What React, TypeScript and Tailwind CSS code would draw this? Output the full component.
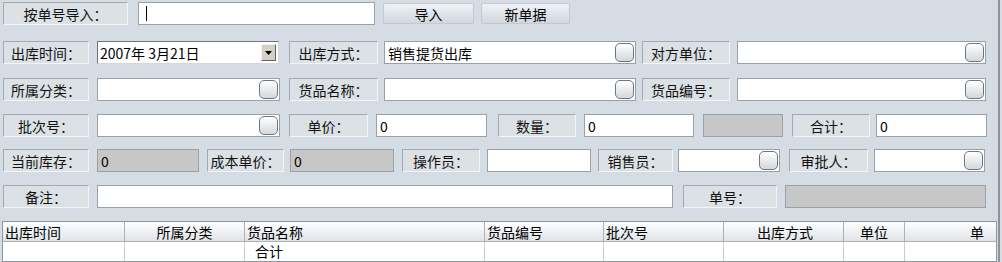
import React from "react";

const font = { fontFamily: '"Noto Sans CJK SC", "Noto Sans", sans-serif' };

function Label({ w, ml, children }: { w: number; ml: number; children: React.ReactNode }) {
  return (
    <div
      className="h-[23px] shrink-0 flex items-center justify-center border border-[#a3a9b0] border-b-[#f2f4f6] border-r-[#f2f4f6] bg-[#dce1e6] text-[14px] text-[#111] leading-none"
      style={{ width: w, marginLeft: ml }}
    >
      {children}
    </div>
  );
}

function PickBtn() {
  return (
    <div className="ml-auto mr-[1px] h-[19px] w-[19px] shrink-0 rounded-[5px] border border-[#6f767e] bg-gradient-to-b from-white to-[#d3d8de]" />
  );
}

function Input({
  w,
  ml,
  value,
  grey,
  pick,
}: {
  w: number;
  ml: number;
  value?: string;
  grey?: boolean;
  pick?: boolean;
}) {
  return (
    <div
      className={
        "h-[23px] shrink-0 flex items-center border border-[#98a1ab] pl-[3px] text-[14px] leading-none text-black " +
        (grey ? "bg-[#c7c7c7]" : "bg-white")
      }
      style={{ width: w, marginLeft: ml }}
    >
      <span>{value}</span>
      {pick && <PickBtn />}
    </div>
  );
}

function Row({ top, children }: { top: number; children: React.ReactNode }) {
  return (
    <div className="flex items-center" style={{ marginTop: top }}>
      {children}
    </div>
  );
}

const cols: { name: string; w: number; align: string }[] = [
  { name: "出库时间", w: 122, align: "justify-start pl-[2px]" },
  { name: "所属分类", w: 120, align: "justify-center" },
  { name: "货品名称", w: 240, align: "justify-start pl-[2px]" },
  { name: "货品编号", w: 119, align: "justify-start pl-[2px]" },
  { name: "批次号", w: 120, align: "justify-start pl-[2px]" },
  { name: "出库方式", w: 120, align: "justify-end pr-[30px]" },
  { name: "单位", w: 61, align: "justify-center" },
  { name: "单", w: 95, align: "justify-end pr-[15px]" },
];

export default function App() {
  return (
    <div className="relative w-[1002px] h-[262px] overflow-hidden bg-[#d5dce3]" style={font}>
      <div className="absolute right-[2px] top-0 h-full w-[2px] bg-[#8c939b]" />

      <Row top={2}>
        <Label w={125} ml={3}>按单号导入：</Label>
        <div className="ml-[10px] h-[23px] w-[237px] flex items-center border border-[#98a1ab] bg-white pl-[7px]">
          <div className="h-[15px] w-[1px] bg-black" />
        </div>
        <button className="ml-[8px] h-[21px] w-[91px] rounded-[2px] border border-[#c3cad2] bg-gradient-to-b from-[#eef1f5] to-[#d2d8df] text-[14px] leading-none text-black">
          导入
        </button>
        <button className="ml-[7px] h-[21px] w-[89px] rounded-[2px] border border-[#c3cad2] bg-gradient-to-b from-[#eef1f5] to-[#d2d8df] text-[14px] leading-none text-black">
          新单据
        </button>
      </Row>

      <Row top={16}>
        <Label w={86} ml={3}>出库时间：</Label>
        <div className="ml-[8px] h-[23px] w-[182px] flex items-center border border-[#6e747b] border-b-[#d6d6d6] border-r-[#d6d6d6] bg-white pl-[2px] text-[14px] leading-none">
          <span>2007年 3月21日</span>
          <div className="ml-auto mr-[2px] h-[17px] w-[15px] flex items-center justify-center border border-[#f4f4f4] border-b-[#5f646a] border-r-[#5f646a] bg-[#d4d0c8]">
            <svg width="7" height="4" viewBox="0 0 7 4">
              <path d="M0 0 H7 L3.5 4 Z" fill="#000" />
            </svg>
          </div>
        </div>
        <Label w={89} ml={10}>出库方式：</Label>
        <Input w={252} ml={6} value="销售提货出库" pick />
        <Label w={88} ml={6}>对方单位：</Label>
        <Input w={249} ml={7} pick />
      </Row>

      <Row top={14}>
        <Label w={86} ml={3}>所属分类：</Label>
        <Input w={183} ml={8} pick />
        <Label w={89} ml={9}>货品名称：</Label>
        <Input w={252} ml={6} pick />
        <Label w={88} ml={6}>货品编号：</Label>
        <Input w={249} ml={7} pick />
      </Row>

      <Row top={13}>
        <Label w={86} ml={3}>批次号：</Label>
        <Input w={183} ml={8} pick />
        <Label w={79} ml={9}>单价：</Label>
        <Input w={111} ml={8} value="0" />
        <Label w={78} ml={11}>数量：</Label>
        <Input w={110} ml={8} value="0" />
        <Input w={80} ml={9} grey />
        <Label w={78} ml={9}>合计：</Label>
        <Input w={111} ml={6} value="0" />
      </Row>

      <Row top={12}>
        <Label w={86} ml={3}>当前库存：</Label>
        <Input w={102} ml={8} value="0" grey />
        <Label w={77} ml={8}>成本单价：</Label>
        <Input w={104} ml={6} value="0" grey />
        <Label w={78} ml={8}>操作员：</Label>
        <Input w={104} ml={7} />
        <Label w={75} ml={7}>销售员：</Label>
        <Input w={102} ml={5} pick />
        <Label w={79} ml={9}>审批人：</Label>
        <Input w={111} ml={6} pick />
      </Row>

      <Row top={13}>
        <Label w={86} ml={3}>备注：</Label>
        <Input w={576} ml={8} />
        <Label w={94} ml={10}>单号：</Label>
        <Input w={201} ml={8} grey />
      </Row>

      <div className="ml-[2px] mt-[13px] w-[995px] border border-[#8e969f] bg-white">
        <div className="flex h-[19px] bg-gradient-to-b from-white to-[#dfe3e8]">
          {cols.map((c) => (
            <div
              key={c.name}
              className={"flex shrink-0 items-center border-r border-[#aab1b9] text-[14px] leading-none text-black " + c.align}
              style={{ width: c.w }}
            >
              {c.name}
            </div>
          ))}
        </div>
        <div className="flex h-[20px] border-t border-[#aab1b9]">
          {cols.map((c, i) => (
            <div
              key={c.name}
              className="flex shrink-0 items-start pt-[2px] border-r border-[#c8cdd2] pl-[10px] text-[14px] leading-none"
              style={{ width: c.w }}
            >
              {i === 2 ? "合计" : ""}
            </div>
          ))}
        </div>
      </div>
    </div>
  );
}
